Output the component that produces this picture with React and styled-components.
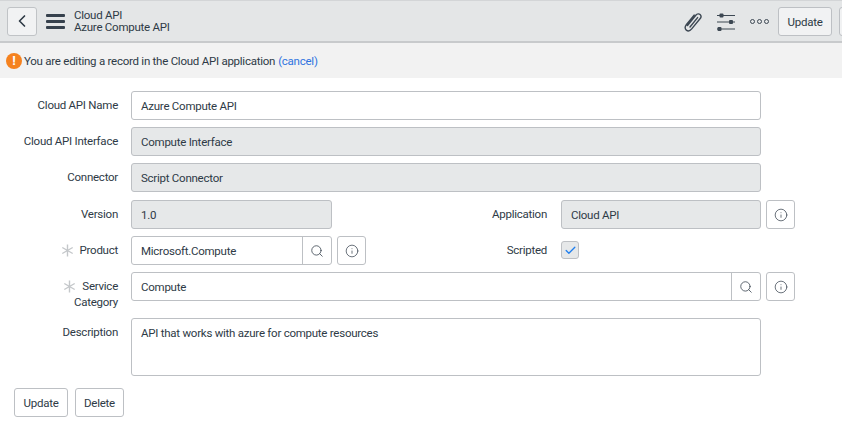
import React from "react";
import styled, { createGlobalStyle } from "styled-components";
import { ChevronLeft, Search, Info, Check } from "lucide-react";

const GlobalStyle = createGlobalStyle`
  html, body {
    margin: 0;
    padding: 0;
    background: #fff;
    overflow: hidden;
  }
  body {
    font-family: "Roboto", "Lato", sans-serif;
    font-size: 11.5px;
    letter-spacing: -0.25px;
    color: #2e3a46;
  }
`;

const Page = styled.div`
  width: 842px;
  height: 424px;
  overflow: hidden;
`;

const Header = styled.header`
  height: 40px;
  display: flex;
  align-items: center;
  background: #e4e6e7;
  border-top: 1px solid #d3d5d7;
  border-bottom: 2px solid #c8cacc;
  padding-left: 7px;
  white-space: nowrap;
`;

const BackButton = styled.button`
  width: 30px;
  height: 29px;
  padding: 0;
  display: flex;
  align-items: center;
  justify-content: center;
  background: #f1f2f3;
  border: 1px solid #c0c3c6;
  border-radius: 3px;
  color: #2e3a46;
`;

const MenuBars = styled.div`
  width: 19px;
  margin-left: 9px;
  display: flex;
  flex-direction: column;
  gap: 3px;

  span {
    height: 3px;
    border-radius: 1px;
    background: #36414d;
  }
`;

const Titles = styled.div`
  margin-left: 9px;
  display: flex;
  flex-direction: column;
  gap: 1px;
  line-height: 11px;
`;

const Tools = styled.div`
  margin-left: auto;
  display: flex;
  align-items: center;
  flex-shrink: 0;
  width: 159px;
  padding-top: 1px;
`;

const ToolIcon = styled.span`
  display: flex;
  margin-right: ${(p) => p.$gap}px;
`;

const Dots = styled.div`
  display: flex;
  gap: 2px;
  margin-right: 9px;

  span {
    width: 5px;
    height: 5px;
    border: 1px solid #3d4853;
    border-radius: 50%;
    box-sizing: border-box;
  }
`;

const Button = styled.button`
  height: 29px;
  padding: 0;
  width: ${(p) => p.$width}px;
  margin-right: ${(p) => p.$gap || 0}px;
  flex-shrink: 0;
  font: inherit;
  letter-spacing: inherit;
  color: inherit;
  background: ${(p) => (p.$tinted ? "#f1f2f3" : "#fff")};
  border: 1px solid #bdc0c4;
  border-radius: 3px;
`;

const Banner = styled.div`
  height: 35px;
  display: flex;
  align-items: center;
  padding-left: 6px;
  background: #f2f2f2;
  white-space: nowrap;
`;

const Alert = styled.span`
  width: 16px;
  height: 16px;
  margin-right: 2px;
  border-radius: 50%;
  background: #f5821f;
  color: #fff;
  font-weight: 700;
  font-size: 13px;
  line-height: 16px;
  text-align: center;
`;

const Cancel = styled.a`
  color: #2f74e0;
  margin-left: 3px;
`;

const Form = styled.div`
  padding-top: 13px;
`;

const Row = styled.div`
  display: flex;
  margin-bottom: ${(p) => p.$gap ?? 7}px;
`;

const Label = styled.label`
  display: block;
  width: ${(p) => p.$width || 118}px;
  margin-right: ${(p) => p.$gap || 13}px;
  flex-shrink: 0;
  padding-top: 6px;
  line-height: 16px;
  text-align: right;
`;

const Required = styled.svg`
  display: inline-block;
  width: 13px;
  height: 13px;
  margin-right: 6px;
  vertical-align: -3px;
  stroke: #c4c7ca;
  stroke-width: 1.4;
`;

const Field = styled.div`
  box-sizing: border-box;
  width: ${(p) => p.$width}px;
  height: ${(p) => p.$height || 29}px;
  flex-shrink: 0;
  display: flex;
  align-items: ${(p) => (p.$multiline ? "flex-start" : "center")};
  padding: ${(p) => (p.$multiline ? "6px 9px" : "0 0 0 9px")};
  background: ${(p) => (p.$readOnly ? "#e6e8e9" : "#fff")};
  border: 1px solid #bdc0c4;
  border-radius: 3px;
  line-height: 16px;
  overflow: hidden;
`;

const FieldText = styled.span`
  flex: 1;
  white-space: nowrap;
`;

const SearchCell = styled.span`
  width: 28px;
  height: 100%;
  display: flex;
  align-items: center;
  justify-content: center;
  border-left: 1px solid #bdc0c4;
  color: #3d4853;
`;

const InfoButton = styled.span`
  box-sizing: border-box;
  width: 29px;
  height: 29px;
  margin-left: 5px;
  flex-shrink: 0;
  display: flex;
  align-items: center;
  justify-content: center;
  background: #fff;
  border: 1px solid #bdc0c4;
  border-radius: 3px;
  color: #3d4853;
`;

const CheckBox = styled.span`
  box-sizing: border-box;
  width: 18px;
  height: 18px;
  margin-top: 5px;
  display: flex;
  align-items: center;
  justify-content: center;
  background: #e6e8e9;
  border: 1px solid #bdc0c4;
  border-radius: 3px;
  color: #1f7fef;
`;

const Actions = styled.div`
  display: flex;
  padding: 5px 0 0 14px;
`;

const Star = () => (
  <Required viewBox="0 0 13 13">
    <path d="M6.5 0.5v12M1.3 3.5l10.4 6M1.3 9.5l10.4-6" />
  </Required>
);

const SearchAddon = () => (
  <SearchCell>
    <Search size={14} strokeWidth={1.4} />
  </SearchCell>
);

const InfoBtn = () => (
  <InfoButton>
    <Info size={14} strokeWidth={1.3} />
  </InfoButton>
);

const Clip = () => (
  <svg width="20" height="20" viewBox="0 0 20 20" fill="none" stroke="#3d4853" strokeWidth="1.4" strokeLinecap="round">
    <path d="M4.500 13.500 12.800 3.200c1.400-1.700 3.300-1.600 4.300-.7s1.200 2.700-.1 4.300L8.700 16.900c-1.800 2.200-4 2.300-5.400 1.200s-1.700-3.300 0-5.400l7.800-9.600" />
    <path d="M7 15 14.600 5.600" />
  </svg>
);

const Sliders = () => (
  <svg width="18" height="18" viewBox="0 0 18 18" fill="#3d4853" stroke="#3d4853" strokeWidth="1.2">
    <path d="M0 2.500h18M0 9h18M0 16h18" />
    <rect x="2.500" y="0.500" width="4" height="4" rx="1" stroke="none" />
    <rect x="12" y="7" width="4" height="4" rx="1" stroke="none" />
    <rect x="0.500" y="14" width="4" height="4" rx="1" stroke="none" />
  </svg>
);

export default function App() {
  return (
    <Page>
      <GlobalStyle />
      <Header>
        <BackButton>
          <ChevronLeft size={20} strokeWidth={2} />
        </BackButton>
        <MenuBars>
          <span />
          <span />
          <span />
        </MenuBars>
        <Titles>
          <div>Cloud API</div>
          <div>Azure Compute API</div>
        </Titles>
        <Tools>
          <ToolIcon $gap={14}>
            <Clip />
          </ToolIcon>
          <ToolIcon $gap={15}>
            <Sliders />
          </ToolIcon>
          <Dots>
            <span />
            <span />
            <span />
          </Dots>
          <Button $width={54} $gap={7} $tinted>
            Update
          </Button>
          <Button $width={54} $tinted aria-label="Delete" />
        </Tools>
      </Header>
      <Banner>
        <Alert>!</Alert>
        You are editing a record in the Cloud API application
        <Cancel>(cancel)</Cancel>
      </Banner>
      <Form>
        <Row>
          <Label>Cloud API Name</Label>
          <Field $width={630}>Azure Compute API</Field>
        </Row>
        <Row>
          <Label>Cloud API Interface</Label>
          <Field $width={630} $readOnly>Compute Interface</Field>
        </Row>
        <Row $gap={8}>
          <Label>Connector</Label>
          <Field $width={630} $readOnly>Script Connector</Field>
        </Row>
        <Row>
          <Label>Version</Label>
          <Field $width={201} $readOnly>1.0</Field>
          <Label $width={215} $gap={14}>Application</Label>
          <Field $width={200} $readOnly>Cloud API</Field>
          <InfoBtn />
        </Row>
        <Row>
          <Label>
            <Star />
            Product
          </Label>
          <Field $width={201}>
            <FieldText>Microsoft.Compute</FieldText>
            <SearchAddon />
          </Field>
          <InfoBtn />
          <Label $width={181} $gap={14}>Scripted</Label>
          <CheckBox>
            <Check size={13} strokeWidth={2.4} />
          </CheckBox>
        </Row>
        <Row $gap={8}>
          <Label>
            <Star />
            Service
            <br />
            Category
          </Label>
          <Field $width={630}>
            <FieldText>Compute</FieldText>
            <SearchAddon />
          </Field>
          <InfoBtn />
        </Row>
        <Row>
          <Label>Description</Label>
          <Field $width={630} $height={58} $multiline>
            API that works with azure for compute resources
          </Field>
        </Row>
        <Actions>
          <Button $width={54} $gap={7}>Update</Button>
          <Button $width={49}>Delete</Button>
        </Actions>
      </Form>
    </Page>
  );
}
